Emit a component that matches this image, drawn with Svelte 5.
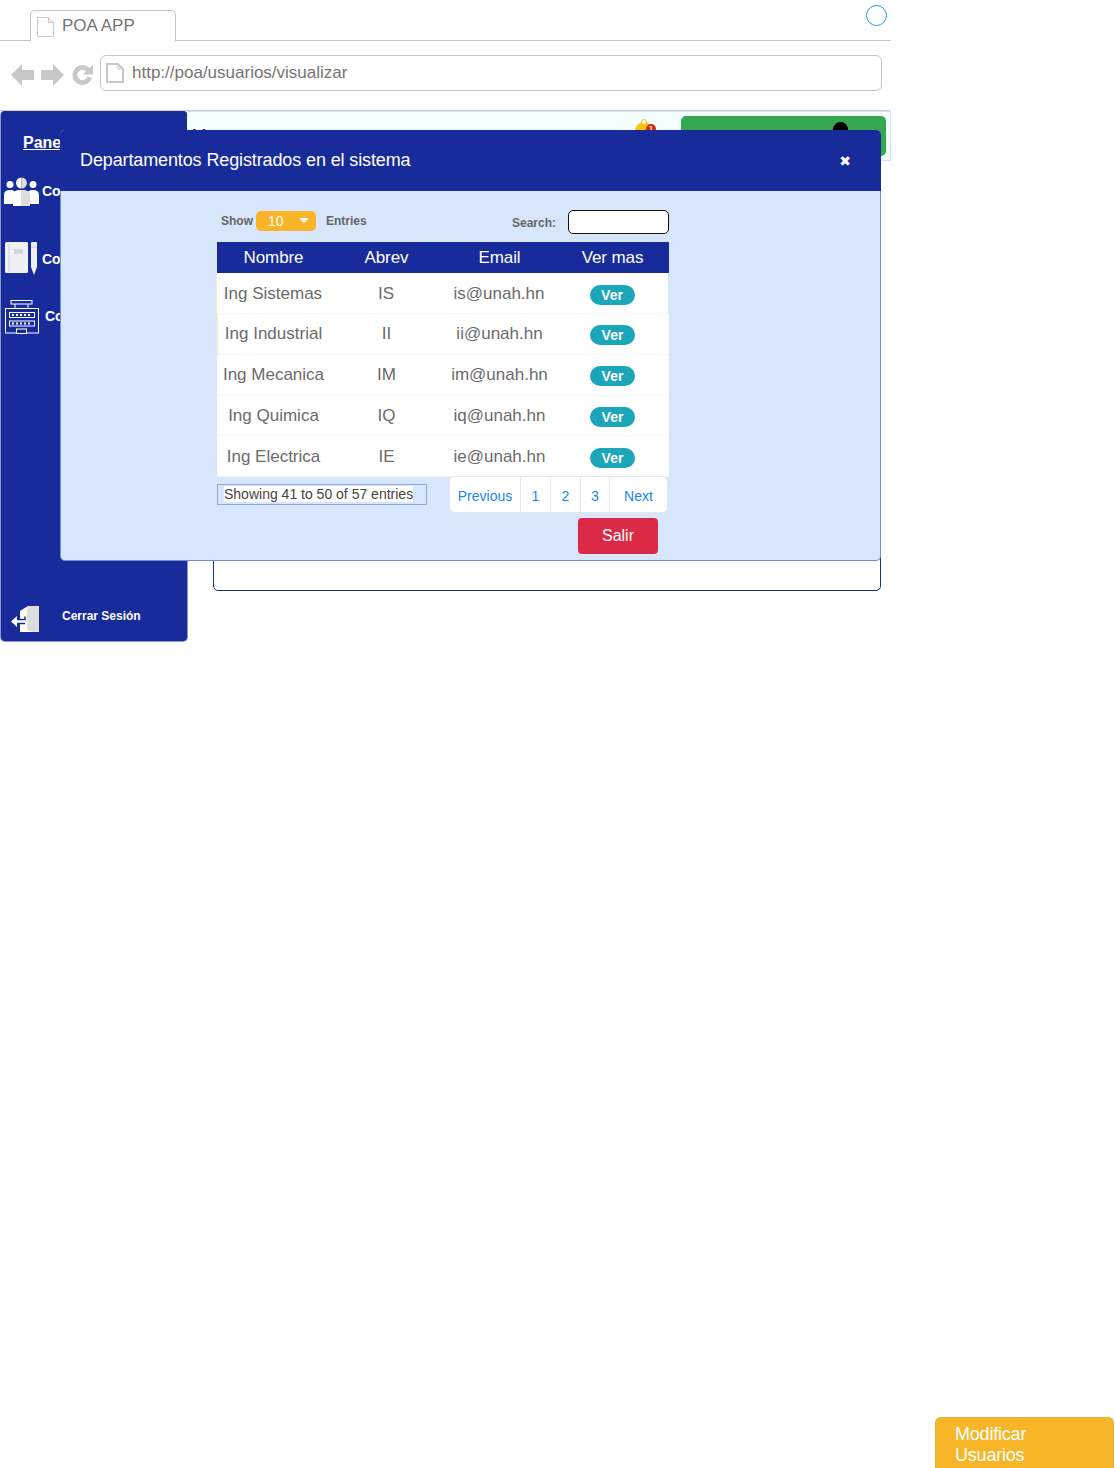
<script>
  const rows = [
    { name: 'Ing Sistemas', abbr: 'IS', mail: 'is@unah.hn' },
    { name: 'Ing Industrial', abbr: 'II', mail: 'ii@unah.hn' },
    { name: 'Ing Mecanica', abbr: 'IM', mail: 'im@unah.hn' },
    { name: 'Ing Quimica', abbr: 'IQ', mail: 'iq@unah.hn' },
    { name: 'Ing Electrica', abbr: 'IE', mail: 'ie@unah.hn' }
  ];
  const pages = ['Previous', '1', '2', '3', 'Next'];
</script>

<div class="page">
  <div class="browser">
    <div class="tabs">
      <div class="tab">
        <svg class="doc" width="17" height="20" viewBox="0 0 17 20"><path d="M.5.5h11l5 5v14H.5z" fill="#fff" stroke="#c8c8c8"/><path d="M11.5.5v5h5" fill="#eee" stroke="#c8c8c8"/></svg>
        <span>POA APP</span>
      </div>
      <span class="circle"></span>
    </div>

    <div class="address">
      <svg class="nav" width="84" height="24" viewBox="0 0 84 24" fill="#c8c8c8">
        <path d="M0 12 11 1v6h12v10H11v6z"/>
        <path d="M53 12 42 1v6H30v10h12v6z"/>
        <path d="M71.500 2a10 10 0 1 0 9.600 12.800l-4.600-1.400a5.200 5.200 0 1 1-1.300-5.100L72 11.500h10V2l-3.300 3.100A10 10 0 0 0 71.500 2z"/>
      </svg>
      <div class="url">
        <svg width="18" height="20" viewBox="0 0 18 20"><path d="M1 1h11l5 5v13H1z" fill="#fff" stroke="#c8c8c8" stroke-width="2"/><path d="M12 1v5h5" fill="none" stroke="#c8c8c8"/></svg>
        <span>http://poa/usuarios/visualizar</span>
      </div>
    </div>

    <div class="workspace">
      <aside class="sidebar">
        <div class="panel-title">Panel</div>
        <div class="side-item users">
          <svg width="35" height="31" viewBox="0 0 35 31">
            <circle cx="6" cy="8.500" r="3.500" fill="#fff"/>
            <circle cx="29" cy="8.500" r="3.500" fill="#fff"/>
            <path d="M17.500 1.500a5.500 5.500 0 0 0 0 11z" fill="#fff"/>
            <path d="M17.500 1.500a5.500 5.500 0 0 1 0 11z" fill="#ddd"/>
            <path d="M0 28V19q0-5 6-5t6 5v9z" fill="#fff"/>
            <path d="M23 28V19q0-5 6-5t6 5v9z" fill="#fff"/>
            <path d="M9 30V19q0-5 8.500-5V30z" fill="#ddd"/>
            <path d="M17.500 14Q26 14 26 19V30h-8.500z" fill="#fff"/>
            <path d="M9 30V19q0-5 8-5V30z" fill="#fff"/>
            <path d="M17 14q9 0 9 5V30h-9z" fill="#ddd"/>
          </svg>
          <span>Con</span>
        </div>
        <div class="side-item book">
          <svg width="33" height="33" viewBox="0 0 33 33">
            <rect y="0" width="23" height="31" rx="1.500" fill="#eef0f5"/>
            <path d="M4 1v29" stroke="#d0d3dc"/>
            <rect x="9" y="7" width="9" height="5" fill="#d3d6df"/>
            <path d="M26 1q0-1 1-1h4q1 0 1 1v24l-3 8-3-8z" fill="#eef0f5"/>
            <path d="M26 5h6" stroke="#c8ccd8"/>
          </svg>
          <span>Con</span>
        </div>
        <div class="side-item reg">
          <svg width="34" height="34" viewBox="0 0 34 34" fill="none" stroke="#fff">
            <rect x="6" y=".5" width="21" height="3.500"/>
            <path d="M10 4v4M23 4v4"/>
            <rect x=".5" y="8.500" width="33" height="24.500"/>
            <rect x="4.500" y="12.500" width="25" height="5"/>
            <rect x="4.500" y="21" width="25" height="5"/>
            <rect x="11.500" y="29" width="10" height="4.500" fill="#182b9b"/>
            <path d="M7 15h2M11 15h2M15 15h2M19 15h2M23 15h2M7 23.500h2M11 23.500h2M15 23.500h2M19 23.500h2M23 23.500h2" stroke-width="2"/>
          </svg>
          <span>Con</span>
        </div>
        <div class="logout">
          <svg width="28" height="27" viewBox="0 0 28 27">
            <path d="M9 6 17 1h11v26H9z" fill="#fff"/>
            <path d="M16 2q0-1 1-1h10q1 0 1 1v23q0 2-2 2h-3q-7-1-7-3z" fill="#ddd"/>
            <path d="M0 16.500 6 11v3h10v5H6v3z" fill="#fff"/>
            <path d="M6 14.500h8v-3M6 18.500h8" fill="none" stroke="#182b9b" stroke-width="1.500"/>
          </svg>
          <span>Cerrar Sesión</span>
        </div>
      </aside>

      <div class="content">
        <header class="strip">
          <span class="peek">kk</span>
          <div class="bell"><span class="bell-body"></span><span class="badge">1</span></div>
          <div class="user"><span class="avatar"></span></div>
        </header>
        <section class="card"></section>
      </div>
    </div>
  </div>

  <button class="modify">Modificar Usuarios</button>

  <div class="modal">
    <div class="modal-head">
      <h2>Departamentos Registrados en el sistema</h2>
      <span class="close">✖</span>
    </div>
    <div class="modal-body">
      <div class="controls">
        <div class="show">
          <span>Show</span>
          <span class="select">10<i></i></span>
          <span class="entries">Entries</span>
        </div>
        <div class="search">
          <span>Search:</span>
          <span class="input"></span>
        </div>
      </div>

      <div class="table">
        <div class="row head">
          <span>Nombre</span><span>Abrev</span><span>Email</span><span>Ver mas</span>
        </div>
        {#each rows as r, i}
          <div class="row body" class:first={i === 0} class:second={i === 1}>
            <span>{r.name}</span><span>{r.abbr}</span><span>{r.mail}</span>
            <span><b class="pill">Ver</b></span>
          </div>
        {/each}
      </div>

      <div class="foot">
        <div class="info"><span>Showing 41 to 50 of 57 entries</span></div>
        <nav class="pager">
          {#each pages as p}<span>{p}</span>{/each}
        </nav>
      </div>
      <div class="actions"><button class="exit">Salir</button></div>
    </div>
  </div>
</div>

<style>
  :global(body) { margin: 0; background: #fff; }
  .page {
    position: relative;
    width: 1115px;
    height: 1468px;
    display: flex;
    flex-direction: column;
    font-family: "Liberation Sans", Arial, sans-serif;
    overflow: hidden;
  }
  .browser { width: 891px; }

  .tabs {
    height: 40px;
    border-bottom: 1px solid #c6c6c6;
    display: flex;
    align-items: flex-start;
  }
  .tab {
    margin: 10px 0 0 30px;
    width: 146px;
    height: 31px;
    box-sizing: border-box;
    background: #fff;
    border: 1px solid #c6c6c6;
    border-bottom: 0;
    border-radius: 5px 5px 0 0;
    display: flex;
    align-items: center;
    padding: 0 0 0 6px;
    gap: 8px;
    color: #757575;
    font-size: 17px;
  }
  .doc { margin-top: 1px; }
  .circle {
    margin: 5px 4px 0 auto;
    width: 19px;
    height: 19px;
    border: 1.500px solid #2196f3;
    border-radius: 50%;
  }

  .address {
    height: 69px;
    box-sizing: border-box;
    padding: 14px 9px 0 11px;
    display: flex;
    align-items: flex-start;
    gap: 5px;
  }
  .nav { margin-top: 8px; flex: none; }
  .url {
    flex: 1;
    height: 36px;
    box-sizing: border-box;
    border: 1px solid #c6c6c6;
    border-radius: 6px;
    display: flex;
    align-items: center;
    padding-left: 5px;
    gap: 8px;
    color: #757575;
    font-size: 17px;
  }

  .workspace {
    display: flex;
    align-items: flex-start;
    border-top: 1px solid #c8d0d8;
    margin-top: 0;
  }
  .sidebar {
    width: 186px;
    height: 530px;
    margin-left: 1px;
    flex: none;
    box-sizing: border-box;
    background: #182b9b;
    border-radius: 4px;
    color: #fff;
    display: flex;
    flex-direction: column;
    box-shadow: 0 0 0 1px #8b96cf;
    clip-path: inset(0 -1px -1px -1px round 4px);
    position: relative;
  }
  .panel-title {
    font-weight: 700;
    font-size: 16px;
    text-decoration: underline;
    margin: 22px 0 0 22px;
    line-height: 20px;
  }
  .side-item {
    display: flex;
    align-items: center;
    font-weight: 700;
    font-size: 14px;
  }
  .side-item span { white-space: nowrap; }
  .users { margin: 23px 0 0 3px; gap: 3px; }
  .book { margin: 35px 0 0 4px; gap: 4px; }
  .reg { margin: 25px 0 0 4px; gap: 6px; }
  .reg span { margin-top: -3px; }
  .users span { margin-top: -2px; }
  .logout {
    margin: auto 0 9px 10px;
    display: flex;
    align-items: center;
    gap: 23px;
    font-weight: 700;
    font-size: 12px;
  }
  .logout span { margin-top: -6px; }

  .content { flex: 1; min-width: 0; }
  .strip {
    height: 50px;
    box-sizing: border-box;
    background: #f5feff;
    border: 1px solid #cfe5fb;
    border-left: 0;
    display: flex;
    align-items: flex-start;
    position: relative;
    padding-left: 5px;
  }
  .peek { font: 700 17px "Liberation Sans", Arial, sans-serif; color: #222; margin-top: 14px; width: 440px; }
  .bell { position: relative; width: 49px; height: 30px; margin-top: 8px; }
  .bell-body {
    position: absolute;
    left: 3px;
    top: 2px;
    width: 18px;
    height: 20px;
    border-radius: 9px 9px 0 0;
    background: #ffc107;
  }
  .bell-body::before {
    content: "";
    position: absolute;
    left: 6px;
    top: -3px;
    width: 4px;
    height: 4px;
    border: 1px solid #ffc107;
    border-radius: 50%;
    background: #fff;
  }
  .badge {
    position: absolute;
    left: 14px;
    top: 4px;
    width: 10px;
    height: 10px;
    border-radius: 50%;
    background: #d3290f;
    color: #fff;
    font: 700 8px/10px "Liberation Sans", Arial, sans-serif;
    text-align: center;
  }
  .user {
    width: 205px;
    height: 40px;
    margin-top: 4px;
    background: #35a84f;
    border-radius: 5px;
    box-sizing: border-box;
    padding: 6px 0 0 152px;
    flex: none;
  }
  .avatar { display: block; width: 15px; height: 30px; border-radius: 8px; background: #000; }
  .card {
    margin: 9px 10px 0 26px;
    height: 421px;
    box-sizing: border-box;
    border: 1px solid #182b9b;
    border-radius: 5px;
  }

  .modify {
    margin: auto 1px 0 auto;
    width: 179px;
    height: 51px;
    box-sizing: border-box;
    background: #f6b628;
    border: 1px solid #e6ae3c;
    border-bottom: 0;
    border-radius: 6px 6px 0 0;
    color: #fff;
    font: 18px/21px "Liberation Sans", Arial, sans-serif;
    letter-spacing: -.2px;
    text-align: left;
    padding: 4px 60px 0 19px;
  }

  .modal {
    position: absolute;
    left: 60px;
    top: 130px;
    width: 821px;
    height: 431px;
    box-sizing: border-box;
    background: #d7e6fa;
    border: 1px solid #6f8fd0;
    border-top: 0;
    border-radius: 5px;
  }
  .modal-head {
    margin: 0 -1px;
    height: 61px;
    background: #182b9b;
    border-radius: 5px 5px 0 0;
    display: flex;
    align-items: center;
    justify-content: space-between;
    padding: 0 30px 0 20px;
    color: #fff;
  }
  .modal-head h2 { margin: 0; font-size: 18px; font-weight: 400; letter-spacing: -.12px; }
  .close { font: 14px "DejaVu Sans", sans-serif; margin-top: 1px; }
  .modal-body { padding: 19px 0 0 156px; width: 452px; }

  .controls {
    display: flex;
    justify-content: space-between;
    align-items: flex-start;
    height: 32px;
    font-weight: 700;
    font-size: 12px;
    color: #666;
  }
  .show { display: flex; align-items: center; margin: 1px 0 0 4px; }
  .select {
    margin-left: 3px;
    width: 60px;
    height: 20px;
    box-sizing: border-box;
    padding-left: 12px;
    background: #f9b428;
    border-radius: 5px;
    color: #fff;
    font-size: 14px;
    font-weight: 400;
    line-height: 20px;
    position: relative;
  }
  .select i {
    position: absolute;
    left: 43px;
    top: 7px;
    border: 5px solid transparent;
    border-top-color: #fff;
    border-bottom: 0;
  }
  .entries { margin-left: 10px; }
  .search { display: flex; align-items: center; gap: 12px; }
  .search span:first-child { margin-top: 2px; }
  .input {
    width: 101px;
    height: 24px;
    box-sizing: border-box;
    background: #fff;
    border: 1px solid #111;
    border-radius: 5px;
  }

  .row {
    display: grid;
    grid-template-columns: repeat(4, 113px);
    align-items: center;
    text-align: center;
  }
  .head {
    height: 31px;
    background: #182b9b;
    color: #fff;
    font-size: 17px;
    letter-spacing: -.1px;
    padding-top: 1px;
    box-sizing: border-box;
  }
  .body {
    height: 40.800px;
    background: #fff;
    color: #6b6b6b;
    font-size: 17px;
    box-shadow: inset 0 -1px 0 #f6f6f3;
  }
  .first {
    height: 41px;
    margin-left: -1px;
    margin-right: 1px;
    border-left: 1px solid #f7edc8;
  }
  .first span { position: relative; left: -.5px; }
  .second { box-shadow: inset 1px 0 0 #f7edc8, inset 0 -1px 0 #f6f6f3; }
  .pill {
    display: inline-block;
    width: 45px;
    height: 20px;
    border-radius: 10px;
    background: #1ba6ba;
    color: #fff;
    font-size: 14px;
    line-height: 20px;
    font-weight: 700;
    vertical-align: middle;
    margin-top: 2px;
  }

  .foot { display: flex; justify-content: space-between; align-items: flex-start; margin-top: -1px; }
  .info {
    margin-top: 8px;
    width: 210px;
    height: 21px;
    box-sizing: border-box;
    border: 1px solid #8ba9d9;
    padding: 1px 0 0 6px;
    font-size: 14px;
    line-height: 17px;
    color: #444;
    white-space: nowrap;
  }
  .info span { background: #fff; }
  .pager {
    width: 219px;
    height: 37px;
    box-sizing: border-box;
    margin-right: 1px;
    display: grid;
    grid-template-columns: 70px 30px 30px 29px 1fr;
    background: #fff;
    border: 1px solid #e4e7ea;
    border-radius: 6px;
    color: #1a86f0;
    font-size: 14px;
  }
  .pager span {
    display: flex;
    align-items: center;
    justify-content: center;
    border-left: 1px solid #e4e7ea;
    padding-top: 2px;
  }
  .pager span:first-child { border-left: 0; }
  .actions { display: flex; justify-content: flex-end; margin: 5px 11px 0 0; }
  .exit {
    width: 80px;
    height: 36px;
    background: #dc2945;
    border: 0;
    border-radius: 4px;
    color: #fff;
    font: 16px "Liberation Sans", Arial, sans-serif;
    padding: 0;
  }
</style>
